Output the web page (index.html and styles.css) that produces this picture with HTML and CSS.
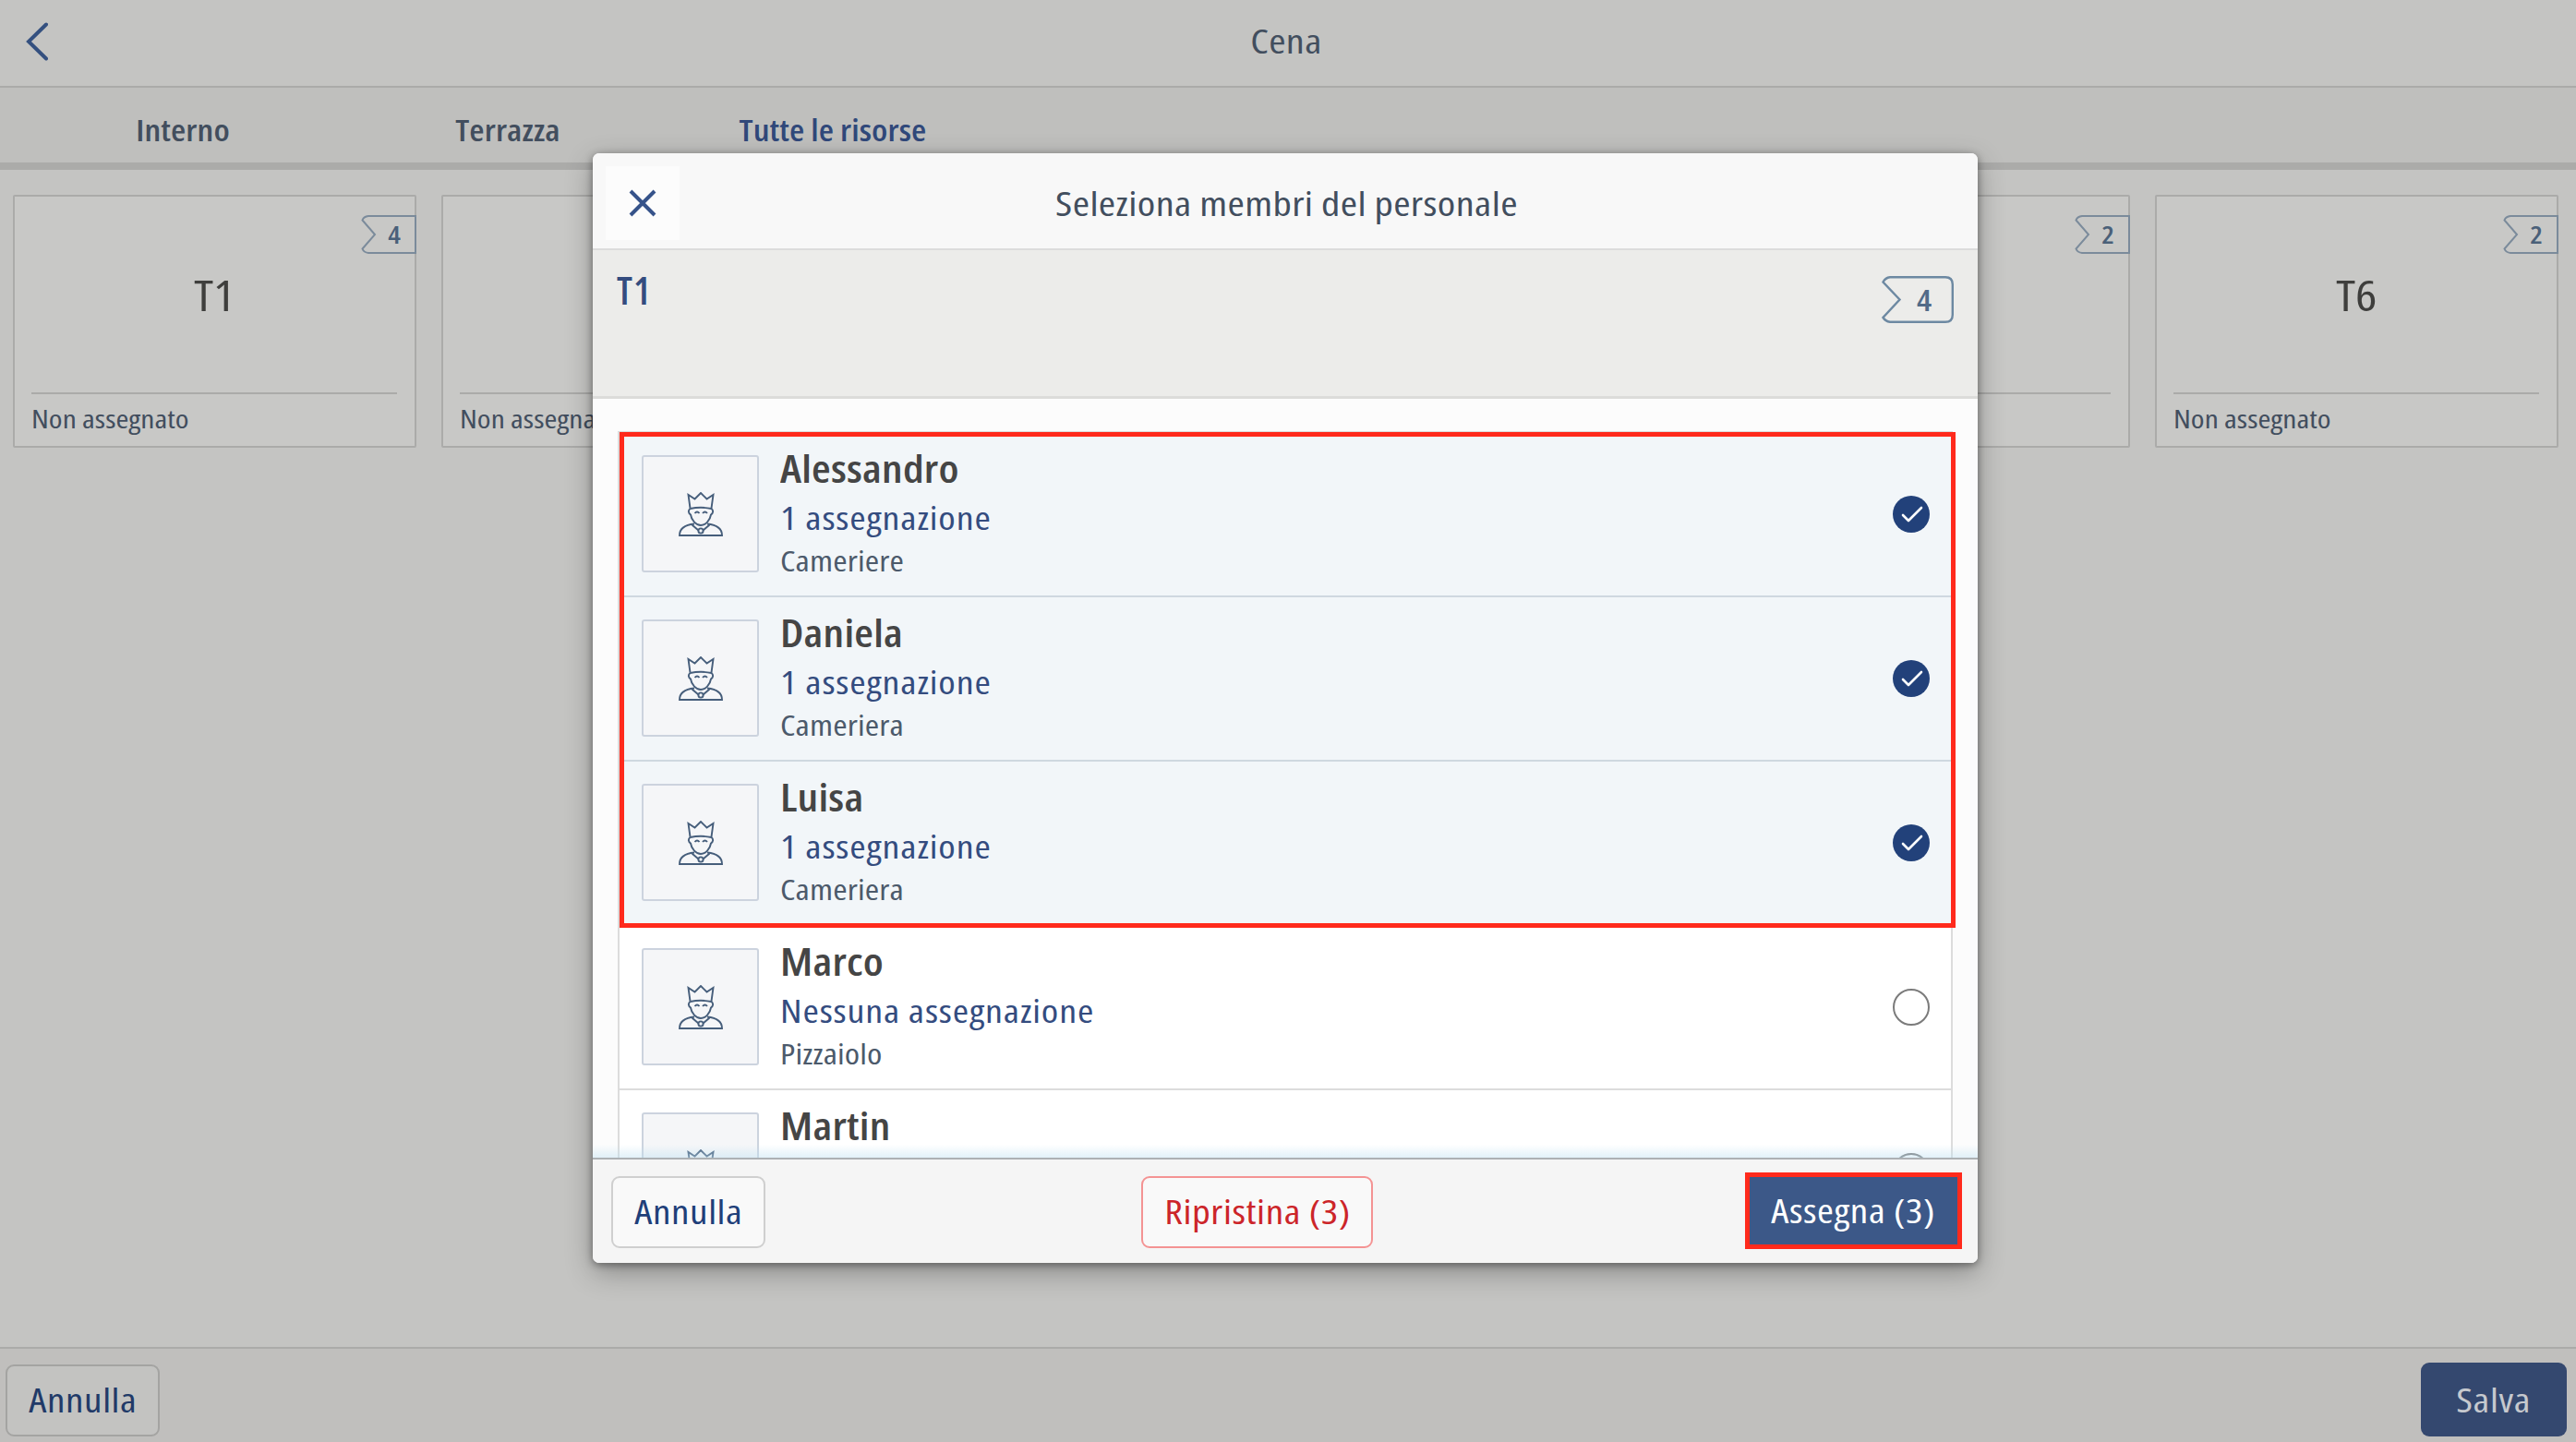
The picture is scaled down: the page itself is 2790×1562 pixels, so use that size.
FILE: index.html
```
<!DOCTYPE html>
<html lang="it">
<head>
    <meta charset="UTF-8">
    <title>Cena</title>
    <link rel="stylesheet" href="styles.css">
</head>
<body>

<!-- Icone -->
<svg class="icone" width="0" height="0">
    <symbol id="persona" viewBox="0 0 48 48">
        <path d="M12.5 17.5 L10.5 3 L17.5 7.500 L24 1 L30.5 7.500 L37.5 3 L35.5 17.5"/>
        <path d="M12.5 18 Q24 15.500 35.500 18 C38 20 37.500 23 35 24.500 C34 31 29 36 24 36 C19 36 14 31 13 24.500 C10.500 23 10 20 12.500 18"/>
        <path d="M17.500 23 Q20 20 22.500 23 M26 23 Q28.500 20 31 23"/>
        <path d="M17 34.500 C7 35.500 1 39 1 47 H47 C47 39 41 35.500 31 34.500"/>
        <path d="M14.500 35.500 L21.500 41.500 M33.500 35.500 L26.500 41.500"/>
        <circle cx="24" cy="42" r="2.600"/>
    </symbol>
    <symbol id="spunta" viewBox="0 0 40 40">
        <circle cx="20" cy="20" r="20"/>
        <path d="M11 21 L17 27 L31 13"/>
    </symbol>
    <symbol id="posti" viewBox="0 0 60 42">
        <path d="M8 1 H59 V41 H8 Q3 40.500 1.500 36.500 L15 21 L1.500 5.500 Q3 1.500 8 1 Z"/>
    </symbol>
</svg>

<div class="pagina">
    <div class="testata">
        <svg class="indietro" viewBox="0 0 24 42"><path d="M22 2.500 L3 21 L22 39.500"/></svg>
        <h1>Cena</h1>
    </div>

    <div class="schede">
        <div class="scheda">Interno</div>
        <div class="scheda">Terrazza</div>
        <div class="scheda attiva">Tutte le risorse</div>
    </div>

    <div class="tavoli" id="tavoli"></div>

    <div class="barra">
        <button class="btn"><span>Annulla</span></button>
        <button class="btn salva"><span>Salva</span></button>
    </div>
</div>

<!-- Finestra di selezione -->
<div class="velo">
    <div class="finestra">
        <div class="finestra-testata">
            <div class="chiudi"><svg viewBox="0 0 30 30"><path d="M2 2 L28 28 M28 2 L2 28"/></svg></div>
            <h2>Seleziona membri del personale</h2>
        </div>
        <div class="riepilogo">
            <strong>T1</strong>
            <div class="posti-grande">
                <svg viewBox="0 0 78 51"><path d="M9 1.200 H69 Q76.800 1.200 76.800 9 V42 Q76.800 49.800 69 49.800 H9 Q4 49 1.500 45 L19.500 25.500 L1.500 6.500 Q4 1.700 9 1.200 Z"/></svg>
                <span>4</span>
            </div>
        </div>
        <div class="elenco">
            <div class="membri" id="membri"></div>
            <div class="sfumatura"></div>
        </div>
        <div class="azioni">
            <button class="btn"><span>Annulla</span></button>
            <button class="btn ripristina"><span>Ripristina (3)</span></button>
            <button class="btn assegna"><span>Assegna (3)</span></button>
        </div>
        <div class="evidenza"></div>
    </div>
</div>

<script>
    const tavoli = [
        { nome: "T1", posti: 4 },
        { nome: "T2", posti: 4 },
        { nome: "T3", posti: 4 },
        { nome: "T4", posti: 4 },
        { nome: "T5", posti: 2 },
        { nome: "T6", posti: 2 }
    ];

    const membri = [
        { nome: "Alessandro", stato: "1 assegnazione", ruolo: "Cameriere", scelto: true },
        { nome: "Daniela", stato: "1 assegnazione", ruolo: "Cameriera", scelto: true },
        { nome: "Luisa", stato: "1 assegnazione", ruolo: "Cameriera", scelto: true },
        { nome: "Marco", stato: "Nessuna assegnazione", ruolo: "Pizzaiolo", scelto: false },
        { nome: "Martin", stato: "", ruolo: "", scelto: false }
    ];

    document.getElementById('tavoli').innerHTML = tavoli.map(t => `
        <div class="tavolo">
            <div class="posti"><svg><use href="#posti"/></svg><span>${t.posti}</span></div>
            <div class="nome-tavolo"><span>${t.nome}</span></div>
            <div class="assegnato">Non assegnato</div>
        </div>
    `).join('');

    document.getElementById('membri').innerHTML = membri.map(m => `
        <div class="membro ${m.scelto ? 'scelto' : ''}">
            <div class="avatar"><svg><use href="#persona"/></svg></div>
            <div class="dati">
                <div class="nome">${m.nome}</div>
                <div class="stato">${m.stato}</div>
                <div class="ruolo">${m.ruolo}</div>
            </div>
            ${m.scelto ? '<svg class="spunta"><use href="#spunta"/></svg>' : '<div class="cerchio"></div>'}
        </div>
    `).join('');
</script>

</body>
</html>
```
FILE: styles.css
```
* {
    box-sizing: border-box;
}
body {
    margin: 0;
    font-family: "Open Sans", "Noto Sans", sans-serif;
    font-stretch: 75%;
    color: #424e5e;
    background-color: #c4c4c2;
}
h1, h2 {
    margin: 0;
    font-size: 37px;
    font-weight: 400;
    letter-spacing: 0.3px;
    text-align: center;
}
svg {
    display: block;
    fill: none;
}
/* il condensed e' troppo stretto, lo allargo un po' */
h1, h2, .btn span, .nome-tavolo span {
    transform: scaleX(1.2);
}
.scheda, .posti span, .posti-grande span {
    transform: scaleX(1.13);
}
.assegnato, .stato, .ruolo {
    transform: scaleX(1.2);
    transform-origin: left;
}
.nome {
    transform: scaleX(1.13);
    transform-origin: left;
}
.icone {
    position: absolute;
}
.pagina {
    display: flex;
    flex-direction: column;
    height: 1562px;
}
.testata {
    display: grid;
    grid-template-columns: 52px 1fr 56px;
    align-items: center;
    height: 95px;
    padding-bottom: 4px;
    border-bottom: 2px solid #ababa9;
}
.testata h1 {
    padding-bottom: 2px;
}
.indietro {
    width: 24px;
    height: 42px;
    margin-left: 28px;
    stroke: #34507f;
    stroke-width: 4;
    stroke-linecap: round;
}
.schede {
    display: flex;
    height: 89px;
    padding-left: 22px;
    background-color: #bfbfbd;
    border-bottom: 8px solid #ababa9;
}
.scheda {
    width: 352px;
    text-align: center;
    font-size: 33px;
    font-weight: 600;
    letter-spacing: 0.1px;
    line-height: 91px;
}
.attiva {
    color: #30487a;
}

/* Tavoli */
.tavoli {
    display: flex;
    flex: 1;
    align-items: flex-start;
    gap: 27px;
    padding: 27px 14px;
}
.tavolo {
    display: flex;
    flex-direction: column;
    width: 437px;
    height: 274px;
    padding: 20px 0 0 18px;
    background-color: #c8c8c6;
    border: 2px solid #ababa9;
    border-radius: 2px;
}
.posti {
    display: grid;
    align-self: flex-end;
    width: 60px;
    height: 42px;
    margin-right: -2px;
    color: #4a6079;
    font-size: 27px;
    font-weight: 600;
}
.posti svg {
    grid-area: 1 / 1;
    width: 60px;
    height: 42px;
    stroke: #7b8b9b;
    stroke-width: 2;
}
.posti span {
    grid-area: 1 / 1;
    justify-self: start;
    margin-left: 30px;
    line-height: 42px;
}
.nome-tavolo {
    width: 396px;
    height: 152px;
    border-bottom: 2px solid #ababa9;
    color: #3e3e3c;
    font-size: 46px;
    line-height: 88px;
    text-align: center;
}
.nome-tavolo span {
    display: inline-block;
}
.assegnato {
    width: 300px;
    font-size: 28px;
    line-height: 53px;
}

/* Pulsanti */
.btn {
    width: 167px;
    height: 78px;
    padding: 0;
    font-family: inherit;
    font-stretch: inherit;
    font-size: 36px;
    letter-spacing: 0.5px;
    color: #1f3f79;
    background-color: #f9f9f9;
    border: 2px solid #cfcfcf;
    border-radius: 9px;
}
.btn span {
    display: inline-block;
}
.barra {
    display: flex;
    justify-content: space-between;
    align-items: center;
    height: 103px;
    padding: 10px 10px 0 6px;
    background-color: #c0bfbd;
    border-top: 2px solid #ababa9;
}
.barra .btn {
    color: #213a68;
    background-color: #c3c3c1;
    border-color: #a4a4a2;
}
.barra .salva {
    width: 158px;
    height: 80px;
    margin-top: -1px;
    color: #c6c9ce;
    background-color: #34486f;
    border: none;
}

/* Finestra */
.velo {
    position: absolute;
    top: 0;
    left: 0;
    padding: 166px 0 0 642px;
}
.finestra {
    position: relative;
    display: flex;
    flex-direction: column;
    width: 1500px;
    height: 1202px;
    background-color: #fcfcfc;
    border-radius: 7px;
    box-shadow: 0 10px 30px rgba(0, 0, 0, 0.3), 0 2px 8px rgba(0, 0, 0, 0.4);
}
.finestra-testata {
    display: grid;
    grid-template-columns: 80px 1fr 77px;
    align-items: center;
    height: 105px;
    padding: 5px 14px 0;
    background-color: #f8f8f8;
    border-bottom: 2px solid #dcdcdc;
    border-radius: 7px 7px 0 0;
}
.finestra-testata h2 {
    padding-bottom: 2px;
}
.chiudi {
    display: flex;
    justify-content: center;
    align-items: center;
    height: 80px;
    background-color: #fcfcfc;
}
.chiudi svg {
    width: 30px;
    height: 30px;
    stroke: #36538a;
    stroke-width: 4;
}
.riepilogo {
    display: flex;
    justify-content: space-between;
    height: 161px;
    padding: 28px 26px 0 26px;
    background-color: #ececea;
    border-bottom: 3px solid #dcdcda;
}
.riepilogo strong {
    color: #344c7f;
    font-size: 42px;
    font-weight: 600;
    letter-spacing: 1px;
    line-height: 29px;
}
.posti-grande {
    display: grid;
    width: 78px;
    height: 51px;
    color: #526b88;
    font-size: 32px;
    font-weight: 600;
}
.posti-grande svg {
    grid-area: 1 / 1;
    width: 78px;
    height: 51px;
    stroke: #6d89a2;
    stroke-width: 2.4;
}
.posti-grande span {
    grid-area: 1 / 1;
    justify-self: start;
    margin-left: 39px;
    line-height: 51px;
}
.elenco {
    position: relative;
    height: 822px;
    padding: 35px 27px 0 27px;
    overflow: hidden;
}
.sfumatura {
    position: absolute;
    left: 0;
    right: 0;
    bottom: 0;
    height: 14px;
    background: linear-gradient(rgba(190, 225, 242, 0), rgba(190, 225, 242, 0.45));
}
.membri {
    background-color: white;
    border: 2px solid #dcdcdc;
}
.membro {
    display: flex;
    height: 178px;
    padding: 24px 23px 0 24px;
    border-bottom: 2px solid #dcdcdc;
}
.scelto {
    background-color: #f2f6f9;
    border-bottom-color: #cfd8e0;
}
.avatar {
    display: flex;
    justify-content: center;
    align-items: center;
    width: 127px;
    height: 127px;
    background-color: #f5f6f8;
    border: 2px solid #ccd3de;
    border-radius: 3px;
}
.avatar svg {
    width: 48px;
    height: 48px;
    stroke: #465e7b;
    stroke-width: 1.9;
}
.dati {
    flex: 1;
    margin: -12px 0 0 23px;
}
.nome, .stato, .ruolo {
    width: 600px;
}
.nome {
    color: #454545;
    font-size: 42px;
    font-weight: 600;
    letter-spacing: 0.2px;
    line-height: 52px;
}
.stato {
    margin-top: 6px;
    color: #344c7f;
    font-size: 35px;
    letter-spacing: 0.7px;
    line-height: 44px;
}
.ruolo {
    margin-top: 4px;
    color: #4c5a6b;
    font-size: 31px;
    letter-spacing: 0.1px;
    line-height: 41px;
}
.spunta, .cerchio {
    width: 40px;
    height: 40px;
    margin-top: 44px;
}
.spunta {
    fill: #22417a;
}
#spunta path {
    fill: none;
    stroke: white;
    stroke-width: 2.6;
    stroke-linecap: round;
    stroke-linejoin: round;
}
.cerchio {
    border: 2px solid #7b7b7b;
    border-radius: 50%;
}
.azioni {
    display: flex;
    justify-content: space-between;
    align-items: center;
    height: 114px;
    padding: 1px 17px 0 20px;
    background-color: #f5f5f5;
    border-top: 2px solid #adb1b4;
    border-radius: 0 0 7px 7px;
}
.azioni .ripristina {
    width: 251px;
    margin-left: 4px;
    color: #cc2529;
    border-color: #f49393;
}
.azioni .assegna {
    width: 235px;
    height: 83px;
    margin-top: -2px;
    color: white;
    background-color: #3c5888;
    border: 5px solid #ff2a1c;
    border-radius: 0;
}
/* Riquadro rosso sui membri selezionati */
.evidenza {
    position: absolute;
    top: 302px;
    left: 29px;
    width: 1447px;
    height: 537px;
    border: 5px solid #ff2a1c;
}
```
